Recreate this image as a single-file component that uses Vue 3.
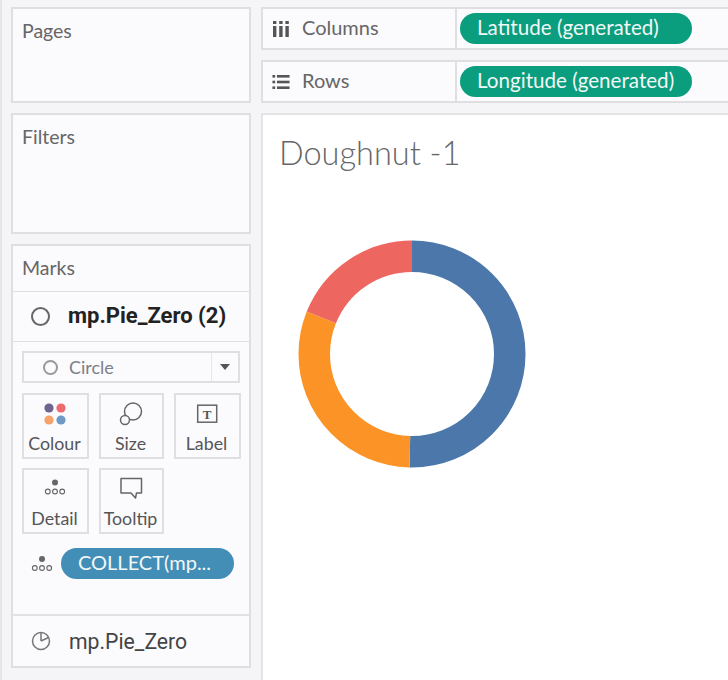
<script setup>
const R = 97.75
const C = 2 * Math.PI * R
// slices of the doughnut, in degrees clockwise from the top
const slices = [
  { color: '#4b77ab', from: 0, to: 181 },
  { color: '#fb9327', from: 181, to: 291.5 },
  { color: '#ee6660', from: 291.5, to: 360 }
]
const dash = (s) => `${((s.to - s.from) / 360) * C} ${C}`
const offset = (s) => -(s.from / 360) * C
</script>

<template>
  <div class="app">
    <div class="topstrip"></div>
    <div class="main">
      <aside class="side">
        <section class="panel pages"><h4>Pages</h4></section>
        <section class="panel filters"><h4>Filters</h4></section>
        <section class="panel marks">
          <h4 class="marks-title">Marks</h4>
          <div class="layer">
            <span class="ring"></span>
            <b>mp.Pie_Zero (2)</b>
          </div>
          <div class="marks-body">
            <div class="select">
              <span class="ring small"></span>
              <span class="select-text">Circle</span>
              <span class="select-arrow"><i></i></span>
            </div>
            <div class="cards">
              <div class="card">
                <svg width="24" height="24" viewBox="0 0 24 24">
                  <circle cx="6" cy="6" r="4.6" fill="#6f6390" />
                  <circle cx="18" cy="6" r="4.6" fill="#ef6a6c" />
                  <circle cx="6" cy="18" r="4.6" fill="#f6a26a" />
                  <circle cx="18" cy="18" r="4.6" fill="#6f9ac6" />
                </svg>
                <span>Colour</span>
              </div>
              <div class="card">
                <svg width="24" height="24" viewBox="0 0 24 24" fill="none" stroke="#666" stroke-width="1.5">
                  <circle cx="14" cy="9.5" r="8.5" />
                  <circle cx="6" cy="18" r="4.5" fill="#fbfafc" />
                </svg>
                <span>Size</span>
              </div>
              <div class="card">
                <svg width="24" height="24" viewBox="0 0 24 24" fill="none">
                  <rect x="2.7" y="3.2" width="19" height="17" stroke="#666" stroke-width="1.5" />
                  <text x="12.2" y="16.6" class="t-glyph">T</text>
                </svg>
                <span>Label</span>
              </div>
              <div class="card">
                <svg width="24" height="24" viewBox="0 0 24 24" fill="none" stroke="#666" stroke-width="1.1">
                  <circle cx="12" cy="5.5" r="3" fill="#666" stroke="none" />
                  <circle cx="4.8" cy="14.5" r="2.4" />
                  <circle cx="12" cy="14.5" r="2.4" />
                  <circle cx="19.2" cy="14.5" r="2.4" />
                </svg>
                <span>Detail</span>
              </div>
              <div class="card">
                <svg width="24" height="24" viewBox="0 0 24 24" fill="none" stroke="#666" stroke-width="1.5">
                  <path d="M2 1.5H22.5V16H17.5L16.5 21L12 16H2Z" stroke-linejoin="round" />
                </svg>
                <span>Tooltip</span>
              </div>
            </div>
            <div class="shelf">
              <svg width="24" height="24" viewBox="0 0 24 24" fill="none" stroke="#666" stroke-width="1.1">
                <circle cx="12" cy="7" r="3" fill="#666" stroke="none" />
                <circle cx="4.8" cy="16" r="2.4" />
                <circle cx="12" cy="16" r="2.4" />
                <circle cx="19.2" cy="16" r="2.4" />
              </svg>
              <span class="pill blue">COLLECT(mp...</span>
            </div>
          </div>
          <div class="layer bottom">
            <svg width="20" height="20" viewBox="0 0 20 20" fill="none" stroke="#777" stroke-width="1.5">
              <circle cx="10" cy="10" r="8.5" />
              <path d="M10 10V1.5M10 10L17.5 6.5" />
            </svg>
            <span>mp.Pie_Zero</span>
          </div>
        </section>
      </aside>

      <div class="work">
        <div class="shelfbar">
          <div class="shelf-label">
            <svg width="18" height="18" viewBox="0 0 18 18" fill="#555">
              <rect x="1" y="1" width="3.4" height="3" />
              <rect x="7.2" y="1" width="3.4" height="3" />
              <rect x="13.4" y="1" width="3.4" height="3" />
              <rect x="1" y="6" width="3.4" height="11" />
              <rect x="7.2" y="6" width="3.4" height="11" />
              <rect x="13.4" y="6" width="3.4" height="11" />
            </svg>
            <span>Columns</span>
          </div>
          <div class="shelf-drop"><span class="pill green">Latitude (generated)</span></div>
        </div>
        <div class="shelfbar">
          <div class="shelf-label">
            <svg width="18" height="18" viewBox="0 0 20 18" preserveAspectRatio="none" fill="#555">
              <rect x="0.5" y="2" width="3" height="2.6" />
              <rect x="5.5" y="2" width="14" height="2.6" />
              <rect x="0.5" y="7.7" width="3" height="2.6" />
              <rect x="5.5" y="7.7" width="14" height="2.6" />
              <rect x="0.5" y="13.4" width="3" height="2.6" />
              <rect x="5.5" y="13.4" width="14" height="2.6" />
            </svg>
            <span>Rows</span>
          </div>
          <div class="shelf-drop"><span class="pill green">Longitude (generated)</span></div>
        </div>
        <div class="view">
          <h2>Doughnut -1</h2>
          <svg class="donut" width="228" height="228" viewBox="0 0 228 228">
            <circle
              v-for="s in slices"
              :key="s.color"
              cx="114"
              cy="114"
              :r="R"
              fill="none"
              :stroke="s.color"
              stroke-width="31.5"
              :stroke-dasharray="dash(s)"
              :stroke-dashoffset="offset(s)"
              transform="rotate(-90 114 114)"
            />
          </svg>
        </div>
      </div>
    </div>
  </div>
</template>

<style>
html, body {
  margin: 0;
  background: #f5f4f6;
  overflow: hidden;
}
</style>

<style scoped>
.app {
  width: 728px;
  height: 680px;
  overflow: hidden;
  font-family: Lato, "Open Sans", sans-serif;
  color: #555;
  background: #f5f4f6;
  border-left: 2px solid #e6e5e8;
  box-sizing: border-box;
}

.topstrip {
  height: 7px;
}

.main {
  display: flex;
  gap: 10px;
  padding-left: 9px;
  height: 673px;
}

.side {
  width: 240px;
  flex: none;
  display: flex;
  flex-direction: column;
  gap: 10px;
}

.panel {
  background: #fbfafc;
  border: 2px solid #dfdee1;
  box-sizing: border-box;
}

.panel h4 {
  margin: 0;
  padding: 11px 9px;
  font-size: 19.5px;
  line-height: 22px;
  font-weight: 400;
  color: #666;
}

.pages {
  height: 96px;
}

.filters {
  height: 121px;
}

.marks {
  height: 424px;
  display: flex;
  flex-direction: column;
}

.panel .marks-title {
  height: 46px;
  box-sizing: border-box;
  padding: 11px 9px;
  border-bottom: 1px solid #dfdee1;
}

.layer {
  height: 50px;
  flex: none;
  display: flex;
  align-items: center;
  padding-left: 18px;
  gap: 18px;
  color: #222;
  border-bottom: 1px solid #dfdee1;
  box-sizing: border-box;
}

.layer b {
  font-weight: 700;
  font-family: Roboto, sans-serif;
  font-size: 22px;
  margin-bottom: 2px;
}

.ring {
  width: 19px;
  height: 19px;
  border: 2px solid #666;
  border-radius: 50%;
  box-sizing: border-box;
  flex: none;
}

.ring.small {
  width: 15px;
  height: 15px;
  border-color: #999;
}

.marks-body {
  flex: 1;
  padding: 9px 9px 0;
  border-bottom: 2px solid #e2e1e4;
}

.select {
  height: 32px;
  display: flex;
  align-items: center;
  border: 2px solid #dfdee1;
  box-sizing: border-box;
  padding-left: 19px;
  font-size: 18px;
  color: #7d8087;
}

.select-text {
  margin-left: 11px;
  flex: 1;
}

.select-arrow {
  width: 27px;
  height: 100%;
  border-left: 1px solid #e6e5e8;
  display: flex;
  align-items: center;
  justify-content: center;
  box-sizing: border-box;
}

.select-arrow i {
  border-left: 5.5px solid transparent;
  border-right: 5.5px solid transparent;
  border-top: 6px solid #555;
}

.cards {
  display: grid;
  grid-template-columns: 67px 65px 67px;
  grid-auto-rows: 66px;
  column-gap: 10px;
  row-gap: 9px;
  margin-top: 10px;
}

.card {
  border: 2px solid #dfdee1;
  box-sizing: border-box;
  display: flex;
  flex-direction: column;
  align-items: center;
  padding: 7px 2px 0 0;
  font-size: 17.8px;
  line-height: 22px;
  color: #555;
}

.card span {
  margin-top: 6px;
  white-space: nowrap;
}

.t-glyph {
  font-family: "Liberation Serif", serif;
  font-size: 13px;
  font-weight: 700;
  text-anchor: middle;
  fill: #555;
}

.shelf {
  display: flex;
  align-items: center;
  gap: 7px;
  margin-top: 14px;
  padding-left: 8px;
}

.pill {
  display: inline-flex;
  align-items: center;
  border-radius: 16px;
  color: #f2f7f7;
  box-sizing: border-box;
  white-space: nowrap;
  padding-bottom: 3px;
}

.pill.blue {
  width: 173px;
  height: 31px;
  padding-left: 17px;
  background: #428eb7;
  font-size: 20px;
}

.bottom {
  border-bottom: none;
  color: #444;
  font-family: Roboto, sans-serif;
  font-size: 21.2px;
}

.work {
  flex: 1;
  min-width: 0;
  display: flex;
  flex-direction: column;
  gap: 10px;
  margin-right: -20px;
}

.shelfbar {
  display: flex;
  height: 43px;
  flex: none;
  background: #fbfafc;
  border: 2px solid #dfdee1;
  box-sizing: border-box;
}

.shelf-label {
  width: 194px;
  flex: none;
  display: flex;
  align-items: center;
  gap: 12px;
  padding-left: 9px;
  box-sizing: border-box;
  font-size: 20px;
  color: #666;
  border-right: 2px solid #dfdee1;
}

.shelf-label span {
  margin-bottom: 3px;
}

.shelf-drop {
  flex: 1;
  display: flex;
  align-items: center;
  padding-left: 3px;
}

.pill.green {
  width: 232px;
  height: 31px;
  padding-left: 17px;
  background: #0a9e7e;
  font-size: 20.6px;
}

.view {
  flex: 1;
  background: #fff;
  border: 2px solid #e4e3e6;
  border-right: none;
  border-bottom: none;
  padding: 18px 16px;
}

.view h2 {
  margin: 0;
  font-size: 32.5px;
  line-height: 40px;
  font-weight: 300;
  color: #666;
}

.donut {
  display: block;
  margin: 67px 0 0 19px;
}
</style>
